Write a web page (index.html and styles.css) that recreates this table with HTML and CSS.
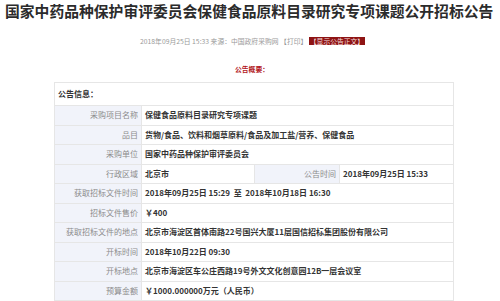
FILE: index.html
```html
<!DOCTYPE html>
<html lang="zh">
<head>
<meta charset="utf-8">
<link rel="stylesheet" href="styles.css">
</head>
<body>
<div class="page">
  <h1 class="title">国家中药品种保护审评委员会保健食品原料目录研究专项课题公开招标公告</h1>
  <div class="meta">2018年09月25日 15:33 来源：中国政府采购网 【打印】 <span class="btn">【显示公告正文】</span></div>
  <div class="summary">公告概要：</div>
  <div class="tbl">
    <div class="row head">公告信息：</div>
    <div class="row"><div class="lab">采购项目名称</div><div class="val">保健食品原料目录研究专项课题</div></div>
    <div class="row"><div class="lab">品目</div><div class="val">货物/食品、饮料和烟草原料/食品及加工盐/营养、保健食品</div></div>
    <div class="row"><div class="lab">采购单位</div><div class="val">国家中药品种保护审评委员会</div></div>
    <div class="row"><div class="lab">行政区域</div><div class="val short">北京市</div><div class="lab lab2">公告时间</div><div class="val">2018年09月25日 15:33</div></div>
    <div class="row"><div class="lab">获取招标文件时间</div><div class="val">2018年09月25日 15:29 &nbsp;至 &nbsp;2018年10月18日 16:30</div></div>
    <div class="row"><div class="lab">招标文件售价</div><div class="val">￥400</div></div>
    <div class="row"><div class="lab">获取招标文件的地点</div><div class="val">北京市海淀区首体南路22号国兴大厦11层国信招标集团股份有限公司</div></div>
    <div class="row"><div class="lab">开标时间</div><div class="val">2018年10月22日 09:30</div></div>
    <div class="row"><div class="lab">开标地点</div><div class="val">北京市海淀区车公庄西路19号外文文化创意园12B一层会议室</div></div>
    <div class="row"><div class="lab">预算金额</div><div class="val">￥1000.000000万元（人民币）</div></div>
  </div>
</div>
</body>
</html>
```
FILE: styles.css
```css
html, body {
  margin: 0;
  padding: 0;
  background: #fff;
}
.page {
  width: 500px;
  height: 301px;
  overflow: hidden;
  font-family: "Noto Sans CJK SC", "Noto Sans", sans-serif;
}
.title {
  margin: 0;
  padding-left: 5px;
  font-size: 14.8px;
  line-height: 22px;
  font-weight: bold;
  color: #2b2b2b;
  white-space: nowrap;
}
.meta {
  margin-top: 14px;
  height: 10px;
  line-height: 10px;
  font-size: 6.8px;
  color: #9a9a9a;
  padding-left: 140px;
  white-space: nowrap;
}
.btn {
  display: inline-block;
  background: #8e1414;
  color: #f4dede;
  line-height: 8px;
  height: 8px;
  padding: 0 1px;
  vertical-align: 0px;
}
.summary {
  margin-top: 18px;
  height: 10px;
  line-height: 10px;
  font-size: 6.8px;
  font-weight: bold;
  color: #b2161c;
  padding-left: 235px;
}
.tbl {
  margin: 8px 0 0 54px;
  width: 400px;
  border: 1px solid #e6e6e6;
  border-bottom: none;
  box-sizing: border-box;
}
.row {
  display: flex;
  height: 19.5px;
  border-bottom: 1px solid #e6e6e6;
  box-sizing: border-box;
  font-size: 8px;
  line-height: 18.5px;
}
.row.head {
  height: 23px;
  line-height: 22px;
  font-weight: bold;
  color: #333;
  padding-left: 3px;
}
.lab {
  width: 87px;
  flex: none;
  background: #f1f3fa;
  color: #8c8c8c;
  text-align: right;
  padding-right: 3px;
  box-sizing: border-box;
  border-right: 1px solid #e6e6e6;
}
.lab2 {
  width: 86px;
  border-left: 1px solid #e6e6e6;
}
.val {
  flex: 1;
  padding-left: 3px;
  font-weight: bold;
  color: #333;
  white-space: nowrap;
}
.val.short {
  flex: none;
  width: 112px;
  box-sizing: border-box;
}
```
